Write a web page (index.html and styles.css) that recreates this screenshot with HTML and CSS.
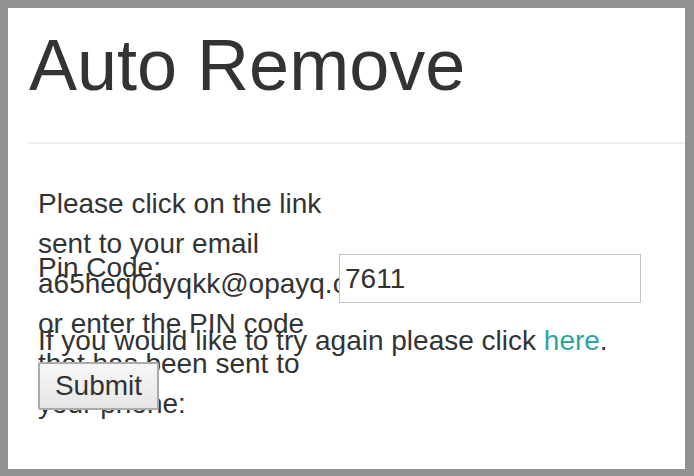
FILE: index.html
```html
<!DOCTYPE html>
<html>
<head>
<meta charset="utf-8">
<title>Auto Remove</title>
<link rel="stylesheet" href="styles.css">
</head>
<body>
<div class="container">
  <h1 class="title">Auto Remove</h1>
  <hr class="rule">
  <div class="content">
    <p class="msg">Please click on the link sent to your email a65heq0dyqkk@opayq.com or enter the PIN code that has been sent to your phone:</p>
    <form class="pin-form">
      <div class="pin-row">
        <label class="pin-label" for="pin">Pin Code:</label>
        <input class="pin-input" id="pin" type="text" value="7611">
      </div>
      <p class="retry">If you would like to try again please click <a class="link" href="#">here</a>.</p>
      <div class="actions"><button class="submit" type="button">Submit</button></div>
    </form>
  </div>
</div>
</body>
</html>
```

FILE: styles.css
```css
html {
  background: #919191;
}
body {
  margin: 8px 9px 7px 8px;
  min-height: 461px;
  background: #ffffff;
  font-family: "Liberation Sans", Arial, Helvetica, sans-serif;
  color: #333333;
  font-size: 28px;
  line-height: 40px;
  overflow: hidden;
}
.container {
  padding: 17px 0 0 20px;
}
.title {
  margin: 0;
  font-size: 72px;
  line-height: 80px;
  font-weight: normal;
  color: #333333;
  padding-left: 1px;
}
.rule {
  margin: 37px 0 0 0;
  border: 0;
  border-top: 2px solid #eeeeee;
  height: 0;
}
.content {
  padding: 40px 0 0 10px;
}
.msg {
  margin: 0;
  width: 300px;
  height: 64px;
}
.pin-form {
  margin: 0;
}
.pin-row {
  display: flex;
  align-items: flex-start;
}
.pin-label {
  flex: 0 0 301px;
  line-height: 40px;
}
.pin-input {
  margin: 6px 0 0 0;
  box-sizing: border-box;
  width: 302px;
  height: 49px;
  border: 1px solid #c2c2c2;
  padding: 0 5px;
  font-family: inherit;
  font-size: 28px;
  color: #333333;
  background: #ffffff;
  outline: none;
  border-radius: 0;
}
.retry {
  margin: 18px 0 0 0;
}
.link {
  color: #2aa5a5;
  text-decoration: none;
}
.actions {
  margin-top: 1px;
  line-height: 0;
}
.submit {
  display: inline-block;
  box-sizing: border-box;
  width: 121px;
  height: 48px;
  padding: 0;
  border: 2px solid #ababab;
  border-radius: 2px;
  background: linear-gradient(#f7f7f7, #e6e6e6);
  font-family: inherit;
  font-size: 28px;
  line-height: 40px;
  color: #333333;
  vertical-align: top;
}
```
